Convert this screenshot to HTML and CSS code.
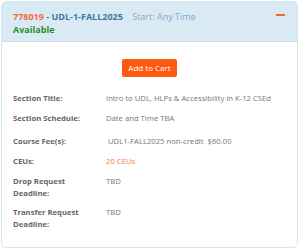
FILE: index.html
```html
<!DOCTYPE html>
<html lang="en">
<head>
  <meta charset="UTF-8">
  <title>Section</title>
  <link rel="stylesheet" href="styles.css">
</head>
<body>
<div class="card">
  <div class="card-head">
    <div class="head-text">
      <div class="head-line">
        <span class="code">778019</span><span class="name"> - UDL-1-FALL2025</span>
        <span class="start">Start: Any Time</span>
      </div>
      <div class="status">Available</div>
    </div>
    <span class="toggle"></span>
  </div>
  <div class="card-body">
    <div class="cart-row">
      <button class="cart-btn">Add to Cart</button>
    </div>
    <div class="row r-title">
      <div class="label">Section Title:</div>
      <div class="value">Intro to UDL, HLPs &amp; Accessibility in K-12 CSEd</div>
    </div>
    <div class="row r-sched">
      <div class="label">Section Schedule:</div>
      <div class="value">Date and Time TBA</div>
    </div>
    <div class="row r-fee">
      <div class="label">Course Fee(s):</div>
      <div class="value fee">UDL1-FALL2025 non-credit&nbsp;&nbsp;$60.00</div>
    </div>
    <div class="row r-ceu">
      <div class="label">CEUs:</div>
      <div class="value ceu">20 CEUs</div>
    </div>
    <div class="row r-drop">
      <div class="label">Drop Request<br>Deadline:</div>
      <div class="value">TBD</div>
    </div>
    <div class="row r-transfer">
      <div class="label">Transfer Request<br>Deadline:</div>
      <div class="value">TBD</div>
    </div>
  </div>
</div>
</body>
</html>
```

FILE: styles.css
```css
body {
  margin: 0;
  padding: 1px;
  font-family: "Open Sans", sans-serif;
  background: #fff;
}
.card {
  width: 297px;
  height: 247px;
  border: 1px solid #d4e8f2;
  border-radius: 5px;
  overflow: hidden;
  box-sizing: border-box;
}
.card-head {
  background: #d9eaf4;
  display: flex;
  justify-content: space-between;
  padding: 8px 0 0 11px;
  height: 40px;
  box-sizing: border-box;
  border-bottom: 1px solid #c6dcea;
}
.head-line {
  font-size: 9px;
  line-height: 13px;
}
.code {
  color: #f36a3a;
  font-weight: bold;
}
.name {
  color: #3b7aa0;
  font-weight: bold;
}
.start {
  color: #7fa9cc;
  margin-left: 7px;
}
.status {
  color: #2e8b2e;
  font-weight: bold;
  font-size: 9px;
  line-height: 13px;
}
.toggle {
  width: 9px;
  height: 2px;
  background: #f36a3a;
  margin-top: 4px;
  margin-right: 12px;
}
.card-body {
  padding: 0 11px;
}
.cart-row {
  display: flex;
  justify-content: center;
  padding-top: 17px;
  padding-bottom: 15px;
}
.cart-btn {
  display: block;
  background: #fd5a10;
  color: #fff;
  border: none;
  border-radius: 2px;
  font-family: "Open Sans", sans-serif;
  font-size: 8px;
  padding: 4px 6px;
  line-height: 10px;
}
.row {
  display: flex;
  font-size: 7.7px;
  line-height: 12px;
  margin-top: 8px;
}
.label {
  width: 93px;
  flex: none;
  color: #666;
  font-weight: bold;
}
.value {
  color: #777;
}
.r-title {
  margin-top: 0;
}
.r-fee {
  margin-top: 11px;
}
.fee {
  padding-left: 2px;
}
.r-ceu {
  margin-top: 8px;
}
.ceu {
  color: #f57d4a;
}
.r-transfer {
  margin-top: 7px;
}
```
